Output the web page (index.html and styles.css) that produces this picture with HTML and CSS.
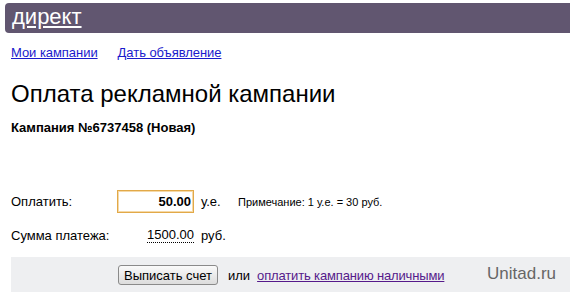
FILE: index.html
```html
<!DOCTYPE html>
<html lang="ru">
<head>
  <meta charset="UTF-8" />
  <title>Директ — оплата кампании</title>
  <link rel="stylesheet" href="styles.css">
</head>
<body>
  <!-- Шапка -->
  <div class="head">
    <a href="#" class="logo">директ</a>
  </div>

  <!-- Меню -->
  <div class="menu">
    <a href="#">Мои кампании</a>
    <a href="#">Дать объявление</a>
  </div>

  <h1>Оплата рекламной кампании</h1>
  <div class="camp">Кампания №6737458 (Новая)</div>

  <!-- Форма оплаты -->
  <div class="row row-pay">
    <span class="label">Оплатить:</span>
    <input class="sum" type="text" value="50.00" />
    <span class="unit">у.е.</span>
    <span class="note">Примечание: 1 у.е. = 30 руб.</span>
  </div>
  <div class="row row-total">
    <span class="label">Сумма платежа:</span>
    <span class="total">1500.00</span>
    <span class="unit">руб.</span>
  </div>

  <div class="actions">
    <button class="btn">Выписать счет</button>
    <span class="or">или</span>
    <a href="#" class="cash">оплатить кампанию наличными</a>
  </div>

  <div class="mark">Unitad.ru</div>
</body>
</html>
```

FILE: styles.css
```css
* {
  box-sizing: border-box;
}

html, body {
  margin: 0;
  padding: 0;
  background: #fff;
  font-family: "Liberation Sans", Arial, sans-serif;
  font-size: 13px;
  color: #000;
}

body {
  position: relative;
  width: 570px;
  height: 292px;
  overflow: hidden;
}

/* Шапка */
.head {
  margin: 3px 0 0 5px;
  height: 30px;
  background: #615670;
  border-radius: 4px 0 0 4px;
  padding: 2px 0 0 7px;
}

.logo {
  color: #fff;
  font-size: 22px;
  line-height: 24px;
}

/* Меню */
.menu {
  display: flex;
  gap: 20px;
  padding: 12px 0 0 11px;
}

.menu a {
  color: #1a1acc;
  font-size: 13px;
  letter-spacing: -0.05px;
}

h1 {
  margin: 19px 0 0 11px;
  font-size: 24px;
  font-weight: normal;
  line-height: 30px;
}

.camp {
  margin: 11px 0 0 11px;
  font-size: 13px;
  font-weight: bold;
}

/* Строки формы */
.row {
  display: flex;
  align-items: center;
  padding-left: 11px;
}

.row-pay {
  margin-top: 55px;
  height: 23px;
}

.row-total {
  margin-top: 13px;
  height: 18px;
}

.label {
  width: 106px;
}

.sum {
  width: 77px;
  height: 23px;
  border: 1px solid #e2a948;
  box-shadow: inset 0 0 0 1px #f5d9a8;
  padding: 0 2px 0 0;
  text-align: right;
  font-family: inherit;
  font-size: 13px;
  font-weight: bold;
  color: #000;
}

.unit {
  margin-left: 7px;
}

.row-pay .unit {
  width: 37px;
}

.note {
  font-size: 11px;
}

.total {
  margin-left: 30px;
  border-bottom: 1px dotted #000;
  line-height: 14px;
}

/* Кнопки */
.actions {
  display: flex;
  align-items: center;
  margin: 13px 0 0 11px;
  height: 36px;
  background: #eeeff1;
  padding-left: 107px;
}

.btn {
  height: 20px;
  padding: 0 5px;
  border: 1px solid #8a8a8a;
  border-radius: 3px;
  background: linear-gradient(#fafafa, #dcdcdc);
  font-family: inherit;
  font-size: 13px;
  color: #000;
}

.or {
  margin: 0 7px 0 10px;
}

.cash {
  color: #551a8b;
  letter-spacing: -0.15px;
}

.mark {
  position: absolute;
  right: 14px;
  bottom: 8px;
  font-size: 17px;
  color: #666;
}
```
